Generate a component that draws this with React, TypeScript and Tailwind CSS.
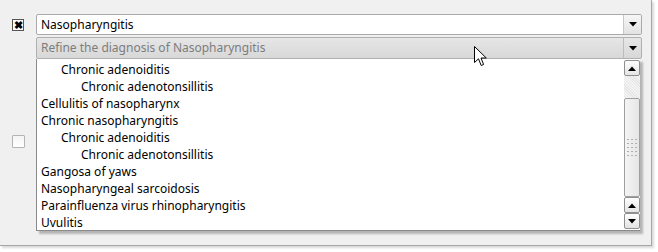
const items: { label: string; indent: number }[] = [
  { label: "Chronic adenoiditis", indent: 1 },
  { label: "Chronic adenotonsillitis", indent: 2 },
  { label: "Cellulitis of nasopharynx", indent: 0 },
  { label: "Chronic nasopharyngitis", indent: 0 },
  { label: "Chronic adenoiditis", indent: 1 },
  { label: "Chronic adenotonsillitis", indent: 2 },
  { label: "Gangosa of yaws", indent: 0 },
  { label: "Nasopharyngeal sarcoidosis", indent: 0 },
  { label: "Parainfluenza virus rhinopharyngitis", indent: 0 },
  { label: "Uvulitis", indent: 0 },
];

const indentClass = ["pl-[4px]", "pl-[24px]", "pl-[44px]"];

function DownArrow() {
  return (
    <svg width="8" height="5" viewBox="0 0 8 5">
      <path d="M0 0H8L4 4.5Z" fill="#000" />
    </svg>
  );
}

function UpArrow() {
  return (
    <svg width="8" height="5" viewBox="0 0 8 5">
      <path d="M0 5H8L4 0.5Z" fill="#000" />
    </svg>
  );
}

function ScrollButton({ up }: { up: boolean }) {
  return (
    <div className="h-[16px] w-[16px] rounded-[2px] border border-[#8f8f8f] bg-gradient-to-b from-[#fdfdfd] to-[#e4e4e4] flex items-center justify-center">
      {up ? <UpArrow /> : <DownArrow />}
    </div>
  );
}

function Cursor() {
  return (
    <svg
      className="absolute left-[474px] top-[46px]"
      width="13"
      height="21"
      viewBox="0 0 13 21"
    >
      <path
        d="M0.5 0.5V16.5L4.5 12.8L7.2 19.5L9.6 18.5L7 12H12.3Z"
        fill="#fff"
        stroke="#000"
        strokeWidth="1"
        strokeLinejoin="round"
      />
    </svg>
  );
}

export default function App() {
  return (
    <div className="relative w-[658px] h-[252px] bg-white font-['Noto_Sans',sans-serif] text-[12px] leading-none text-black">
      <div className="w-[652px] h-[246px] bg-[#f0f0f0] border-r border-b border-[#a6a6a6] shadow-[2px_2px_2px_rgba(0,0,0,0.15)] pt-[14px] pr-[9px] pl-[12px]">
        {/* first row */}
        <div className="flex items-center h-[21px]">
          <div className="w-[12px] h-[12px] border border-[#555] bg-white flex items-center justify-center text-[11px] font-bold leading-none">
            ✖
          </div>
          <div className="ml-[12px] flex-1 h-[21px] flex border border-[#aaaaaa] rounded-[2px] bg-white">
            <div className="flex-1 pl-[4px] flex items-center">Nasopharyngitis</div>
            <div className="w-[18px] border-l border-[#c8c8c8] rounded-r-[2px] bg-gradient-to-b from-[#f6f6f6] to-[#e2e2e2] flex items-center justify-center">
              <DownArrow />
            </div>
          </div>
        </div>

        {/* second row */}
        <div className="flex mt-[2px]">
          <div className="w-[24px] pt-[98px]">
            <div className="w-[13px] h-[13px] border border-[#b4b4b4] rounded-[1px] bg-gradient-to-b from-[#f4f4f4] to-[#ffffff]" />
          </div>
          <div className="flex-1 flex flex-col">
            <div className="h-[22px] flex border border-[#b0b0b0] rounded-[2px] bg-gradient-to-b from-[#e6e6e6] to-[#d8d8d8]">
              <div className="flex-1 pl-[4px] flex items-center text-[#7d7d7d]">
                Refine the diagnosis of Nasopharyngitis
              </div>
              <div className="w-[18px] border-l border-[#bcbcbc] flex items-center justify-center">
                <DownArrow />
              </div>
            </div>
            <div className="h-[172px] mr-[2px] flex bg-white border-l border-b border-[#8a8a8a] shadow-[3px_3px_2px_rgba(0,0,0,0.25)]">
              <div className="flex-1 pt-[2px]">
                {items.map((it, i) => (
                  <div key={i} className={`h-[17px] flex items-center ${indentClass[it.indent]}`}>
                    {it.label}
                  </div>
                ))}
              </div>
              <div className="w-[16px] flex flex-col pt-[1px] pb-[1px]">
                <ScrollButton up />
                <div className="h-[22px] bg-[repeating-linear-gradient(45deg,#f4f4f4_0px,#f4f4f4_1px,#e6e6e6_1px,#e6e6e6_2px)]" />
                <div className="flex-1 rounded-[2px] border border-[#a0a0a0] bg-gradient-to-r from-[#f4f4f4] to-[#e6e6e6] flex items-center justify-center">
                  <div className="grid grid-cols-3 gap-x-[2px] gap-y-[3px]">
                    {Array.from({ length: 15 }).map((_, i) => (
                      <div key={i} className="w-[2px] h-[1px] bg-[#b0b0b0]" />
                    ))}
                  </div>
                </div>
                <ScrollButton up />
                <ScrollButton up={false} />
              </div>
            </div>
          </div>
        </div>
      </div>
      <Cursor />
    </div>
  );
}
